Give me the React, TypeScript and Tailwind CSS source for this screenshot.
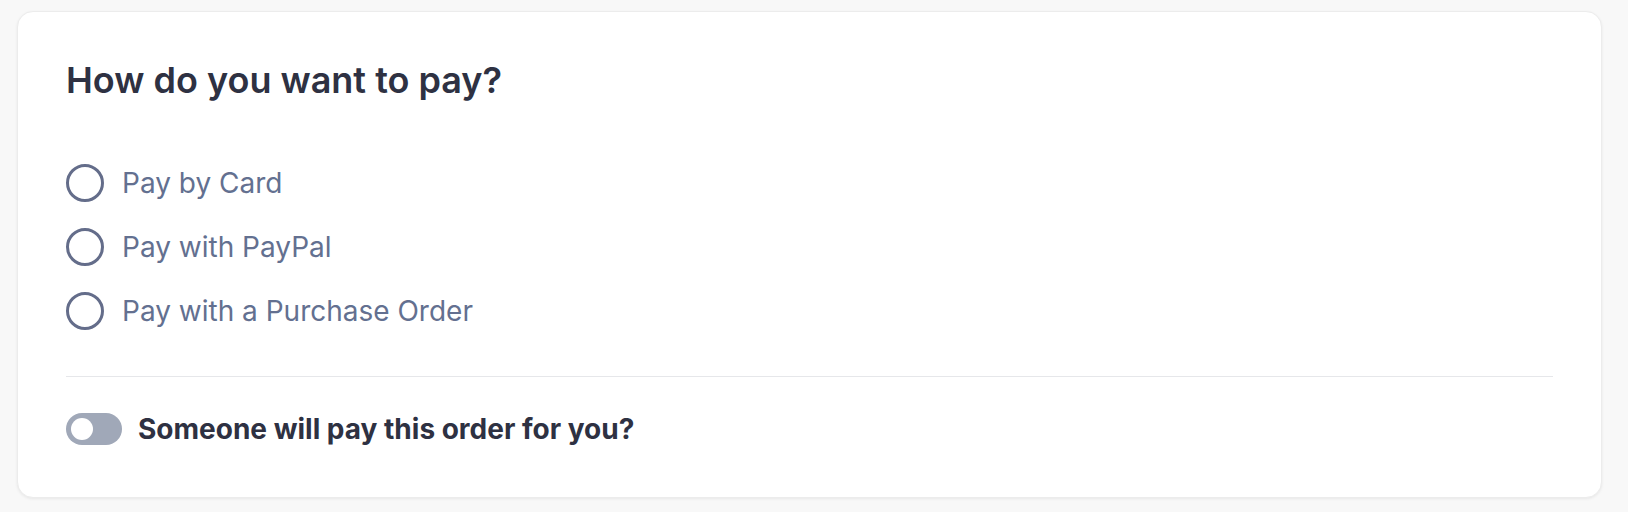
import { useState } from "react"

const options = ["Pay by Card", "Pay with PayPal", "Pay with a Purchase Order"]

export default function App() {
  const [selected, setSelected] = useState<string | null>(null)
  const [someoneElse, setSomeoneElse] = useState(false)

  return (
    <div className="min-h-screen bg-[#f8f8f8] pt-[11px] pl-[17px] font-['Inter',sans-serif]">
      <div className="w-[1585px] h-[487px] rounded-2xl bg-white border border-[#ececec] shadow-[0_1px_3px_rgba(0,0,0,0.07)] px-12 pt-12">
        <h2 className="text-[36px] leading-10 font-semibold text-[#2e3142]">How do you want to pay?</h2>

        {/* payment options */}
        <div className="mt-16 flex flex-col gap-[26px]">
          {options.map((opt) => (
            <label key={opt} className="flex items-center gap-[18px] cursor-pointer" onClick={() => setSelected(opt)}>
              <span className="flex items-center justify-center w-[38px] h-[38px] rounded-full border-[3px] border-[#646d8a]">
                {selected === opt && <span className="w-4 h-4 rounded-full bg-[#646d8a]" />}
              </span>
              <span className="text-[28px] leading-8 text-[#637090]">{opt}</span>
            </label>
          ))}
        </div>

        <div className="mt-[46px] border-t border-[#e6e7ea]" />

        {/* pay by someone else */}
        <div className="mt-9 flex items-center gap-4">
          <button
            onClick={() => setSomeoneElse(!someoneElse)}
            className={`relative w-14 h-8 rounded-full ${someoneElse ? "bg-[#2e3142]" : "bg-[#a0a8b8]"}`}
          >
            <span
              className={`absolute top-[5px] w-[22px] h-[22px] rounded-full bg-white ${someoneElse ? "left-[29px]" : "left-[5px]"}`}
            />
          </button>
          <span className="text-[28px] leading-8 font-bold text-[#2e3142]">Someone will pay this order for you?</span>
        </div>
      </div>
    </div>
  )
}
